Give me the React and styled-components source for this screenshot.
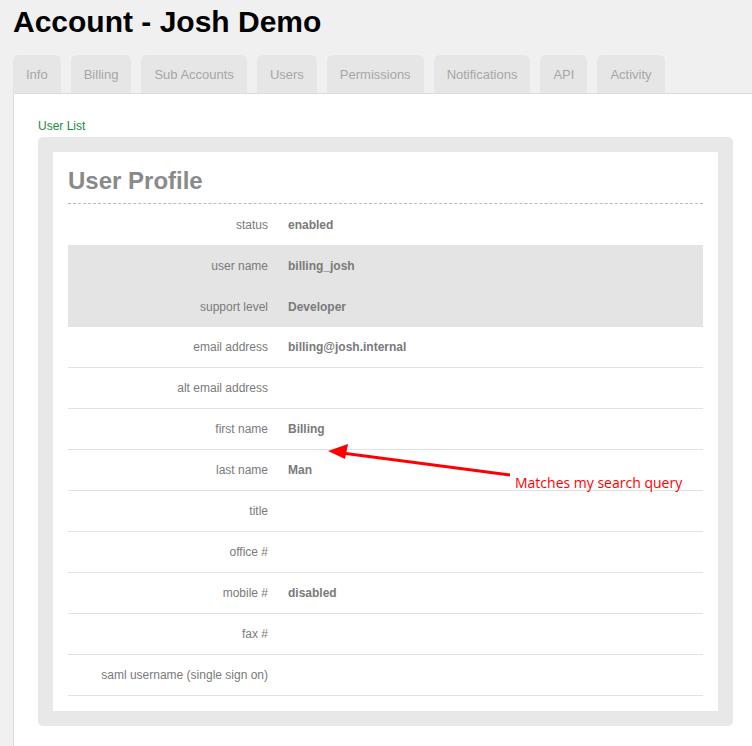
import React from 'react';
import styled, { createGlobalStyle } from 'styled-components';

const GlobalStyle = createGlobalStyle`
    html, body {
        margin: 0;
        padding: 0;
        background: #f0f0f0;
        font-family: "Liberation Sans", Arial, sans-serif;
    }
`

const Page = styled.div`
    padding: 4px 0 0 13px;
    min-height: 746px;
    box-sizing: border-box;
    overflow: hidden;
`

const Title = styled.h1`
    margin: 0 0 15px 0;
    font-size: 30px;
    font-weight: bold;
    color: #000;
    line-height: 36px;
`

const Tabs = styled.div`
    display: flex;
    gap: 10px;
`

const Tab = styled.div`
    height: 38px;
    padding: 0 13px;
    display: flex;
    align-items: center;
    background: #e6e6e6;
    border-radius: 6px 6px 0 0;
    color: #a6a6a6;
    font-size: 13px;
`

const Panel = styled.div`
    background: #fff;
    border-top: 1px solid #dcdcdc;
    border-left: 1px solid #dcdcdc;
    padding: 25px 19px 40px 24px;
    position: relative;
`

const Crumb = styled.a`
    display: block;
    color: #1a8a3c;
    font-size: 12px;
    line-height: 14px;
    margin-bottom: 4px;
    text-decoration: none;
`

const Card = styled.div`
    width: 695px;
    box-sizing: border-box;
    background: #e8e8e8;
    border-radius: 5px;
    padding: 15px;
`

const Inner = styled.div`
    background: #fff;
    padding: 15px 15px 15px 15px;
`

const Heading = styled.h2`
    margin: 0;
    padding-bottom: 8px;
    font-size: 24px;
    line-height: 28px;
    color: #8a8a8a;
    font-weight: bold;
    border-bottom: 1px dashed #bbb;
`

const Row = styled.div`
    display: grid;
    grid-template-columns: 200px 1fr;
    column-gap: 20px;
    align-items: center;
    height: 41px;
    box-sizing: border-box;
    font-size: 12px;
    color: #7a7a7a;
    background: ${p => (p.shade ? '#e4e4e4' : '#fff')};
    border-bottom: ${p => (p.line ? '1px solid #e2e2e2' : 'none')};
`

const Label = styled.div`
    text-align: right;
`

const Value = styled.div`
    font-weight: bold;
`

const Note = styled.div`
    position: absolute;
    left: 501px;
    top: 379px;
    color: #ff0000;
    font-family: "Open Sans", "DejaVu Sans", sans-serif;
    font-size: 14px;
`

const Arrow = styled.svg`
    position: absolute;
    left: 300px;
    top: 340px;
    overflow: visible;
`

const rows = [
    { label: 'status', value: 'enabled' },
    { label: 'user name', value: 'billing_josh', shade: true },
    { label: 'support level', value: 'Developer', shade: true },
    { label: 'email address', value: 'billing@josh.internal', line: true },
    { label: 'alt email address', value: '', line: true },
    { label: 'first name', value: 'Billing', line: true },
    { label: 'last name', value: 'Man', line: true },
    { label: 'title', value: '', line: true },
    { label: 'office #', value: '', line: true },
    { label: 'mobile #', value: 'disabled', line: true },
    { label: 'fax #', value: '', line: true },
    { label: 'saml username (single sign on)', value: '', line: true },
]

const tabs = ['Info', 'Billing', 'Sub Accounts', 'Users', 'Permissions', 'Notifications', 'API', 'Activity']

const App = () => {
    return (
    <Page>
        <GlobalStyle />
        <Title>Account - Josh Demo</Title>
        <Tabs>
            {tabs.map((t, i) => <Tab key={i}>{t}</Tab>)}
        </Tabs>
        <Panel>
            <Crumb href="#">User List</Crumb>
            <Card>
                <Inner>
                    <Heading>User Profile</Heading>
                    {rows.map((r, i) => (
                        <Row key={i} shade={r.shade} line={r.line}>
                            <Label>{r.label}</Label>
                            <Value>{r.value}</Value>
                        </Row>
                    ))}
                </Inner>
            </Card>
            <Arrow width="200" height="40" viewBox="0 0 200 40">
                <line x1="196" y1="41" x2="28" y2="19" stroke="#ff0000" strokeWidth="3" />
                <polygon points="14,17 34,10 31,25" fill="#ff0000" />
            </Arrow>
            <Note>Matches my search query</Note>
        </Panel>
    </Page>
    )
}

export default App;
